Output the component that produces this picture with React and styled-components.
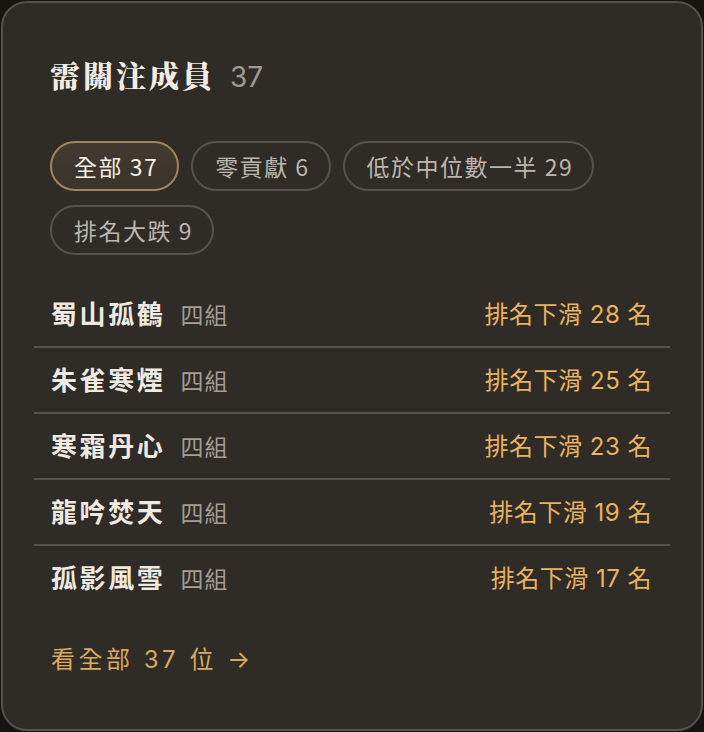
import React from "react";
import styled, { createGlobalStyle } from "styled-components";

const Global = createGlobalStyle`
  html, body { margin: 0; padding: 0; background: #161411; }
  body { font-family: Inter, "Noto Sans CJK TC", sans-serif; }
  * { box-sizing: border-box; }
`;

const Card = styled.section`
  margin: 1px;
  width: 702px;
  height: 730px;
  background: #2f2b26;
  border: 2px solid #55514b;
  border-radius: 26px;
  padding: 53px 31px 0;
  display: flex;
  flex-direction: column;
`;

const Header = styled.header`
  display: flex;
  align-items: baseline;
  gap: 15px;
  padding-left: 16px;
`;

const Title = styled.h2`
  margin: 0;
  font-family: "Noto Serif CJK TC", "Noto Sans CJK TC", serif;
  font-weight: 900;
  font-size: 30px;
  line-height: 36px;
  letter-spacing: 3px;
  color: #f2ede4;
`;

const Count = styled.span`
  font-size: 28px;
  color: #9e9a92;
`;

const Chips = styled.div`
  display: flex;
  flex-wrap: wrap;
  gap: 14px 12px;
  padding-left: 16px;
  margin-top: 47px;
  max-width: 620px;
`;

const Chip = styled.button`
  height: 50px;
  padding: 0 19px 0 22px;
  border-radius: 999px;
  font-family: "Noto Sans CJK TC", sans-serif;
  font-size: 23px;
  letter-spacing: 1.5px;
  cursor: pointer;
  display: flex;
  align-items: center;
  border: 2px solid ${(p) => (p.$active ? "#a2845a" : "#56524c")};
  background: ${(p) =>
    p.$active ? "linear-gradient(180deg, #433a2f, #3a332b)" : "transparent"};
  color: ${(p) => (p.$active ? "#f4efe6" : "#bcb7ae")};
`;

const List = styled.ul`
  list-style: none;
  margin: 27px 0 0;
  padding: 0;
`;

const Row = styled.li`
  height: 66px;
  padding: 0 18px 3px 17px;
  display: flex;
  align-items: center;
  justify-content: space-between;
  border-bottom: 2px solid #575450;
  &:last-child { border-bottom: none; height: 64px; }
`;

const Who = styled.div`
  display: flex;
  align-items: baseline;
  gap: 15px;
`;

const Name = styled.span`
  font-size: 26px;
  font-weight: 700;
  letter-spacing: 2.6px;
  color: #efeae1;
`;

const Group = styled.span`
  font-size: 23px;
  color: #a39e96;
  letter-spacing: 1px;
`;

const Drop = styled.span`
  font-size: 24px;
  color: #e9b35f;
  letter-spacing: 0.5px;
`;

const Footer = styled.a`
  margin-top: 32px;
  padding-left: 17px;
  font-size: 24px;
  line-height: 36px;
  letter-spacing: 3.5px;
  color: #d8a95f;
  text-decoration: none;
  cursor: pointer;
`;

const chips = [
  { label: "全部 37", active: true },
  { label: "零貢獻 6" },
  { label: "低於中位數一半 29" },
  { label: "排名大跌 9" },
];

const members = [
  { name: "蜀山孤鶴", group: "四組", drop: 28 },
  { name: "朱雀寒煙", group: "四組", drop: 25 },
  { name: "寒霜丹心", group: "四組", drop: 23 },
  { name: "龍吟焚天", group: "四組", drop: 19 },
  { name: "孤影風雪", group: "四組", drop: 17 },
];

export default function App() {
  return (
    <>
      <Global />
      <Card>
        <Header>
          <Title>需關注成員</Title>
          <Count>37</Count>
        </Header>
        <Chips>
          {chips.map((c) => (
            <Chip key={c.label} $active={c.active}>
              {c.label}
            </Chip>
          ))}
        </Chips>
        <List>
          {members.map((m) => (
            <Row key={m.name}>
              <Who>
                <Name>{m.name}</Name>
                <Group>{m.group}</Group>
              </Who>
              <Drop>排名下滑 {m.drop} 名</Drop>
            </Row>
          ))}
        </List>
        <Footer>看全部 37 位 →</Footer>
      </Card>
    </>
  );
}
